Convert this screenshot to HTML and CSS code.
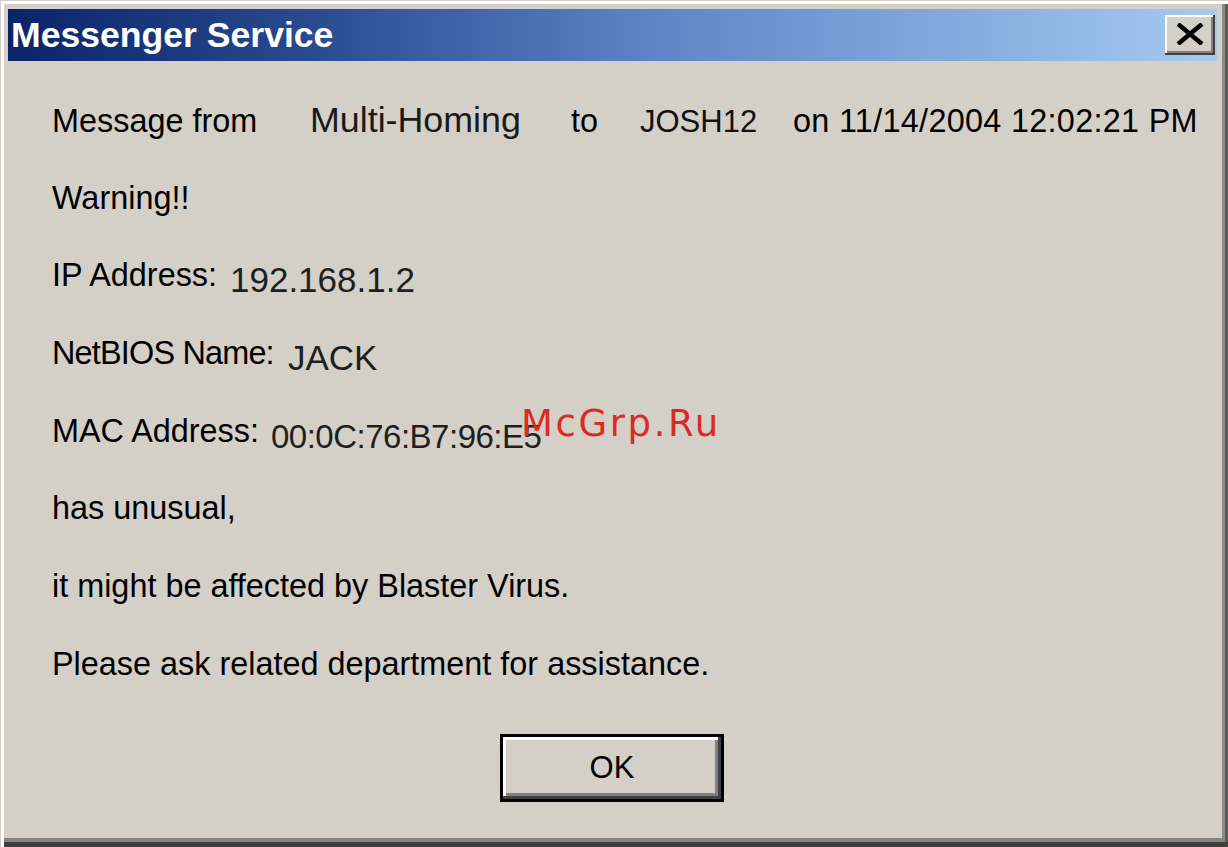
FILE: index.html
```html
<!DOCTYPE html>
<html>
<head>
<meta charset="utf-8">
<title>Messenger Service</title>
<link rel="stylesheet" href="styles.css">
</head>
<body>
<div class="window">
  <div class="titlebar">
    <span class="title">Messenger Service</span>
    <button class="close" aria-label="Close">
      <svg width="28" height="22" viewBox="0 0 28 22"><path d="M2 1 L26 21 M26 1 L2 21" stroke="#000" stroke-width="4.5" fill="none"/></svg>
    </button>
  </div>
  <div class="content">
    <div class="row">
      <span class="cell w1">Message from</span><span class="cell w2 val-big">Multi-Homing</span><span class="cell w3">to</span><span class="cell w4 josh">JOSH12</span><span class="cell date">on 11/14/2004 12:02:21 PM</span>
    </div>
    <div class="row">Warning!!</div>
    <div class="row"><span class="cell wip">IP Address:</span><span class="val">192.168.1.2</span></div>
    <div class="row"><span class="cell wnb">NetBIOS Name:</span><span class="val">JACK</span></div>
    <div class="row"><span class="cell wmac">MAC Address:</span><span class="val mac">00:0C:76:B7:96:E5</span></div>
    <div class="row">has unusual,</div>
    <div class="row">it might be affected by Blaster Virus.</div>
    <div class="row">Please ask related department for assistance.</div>
    <div class="actions">
      <button class="ok">OK</button>
    </div>
  </div>
  <div class="watermark">McGrp.Ru</div>
</div>
</body>
</html>
```

FILE: styles.css
```css
html, body {
  margin: 0;
  padding: 0;
  background: #d4d0c8;
}
.window {
  position: relative;
  width: 1228px;
  height: 847px;
  box-sizing: border-box;
  background: #d4d0c8;
  padding: 9px 11px 0 8px;
  box-shadow:
    inset 1px 1px 0 #d4d0c8,
    inset 4px 4px 0 #ffffff,
    inset 0 -5px 0 #3e3e3a,
    inset -3px 0 0 #5a5a56,
    inset 0 -9px 0 #858581,
    inset -6px 0 0 #8a8a86;
  font-family: "Liberation Sans", Arial, sans-serif;
  color: #000;
  overflow: hidden;
}
.titlebar {
  height: 52px;
  display: flex;
  align-items: center;
  justify-content: space-between;
  background: linear-gradient(to right, #0a246a 0%, #2a4a90 25%, #6088c8 55%, #a6caf0 100%);
  padding: 0 2px 0 3px;
}
.title {
  color: #fff;
  font-weight: bold;
  font-size: 35.6px;
  line-height: 52px;
}
.close {
  width: 50px;
  height: 40px;
  padding: 0;
  margin: 0;
  background: #d4d0c8;
  border: none;
  box-shadow:
    inset -2px -2px 0 #404040,
    inset 2px 2px 0 #ffffff,
    inset -4px -4px 0 #808080;
  display: flex;
  align-items: center;
  justify-content: center;
}
.close svg {
  display: block;
  margin-top: -2px;
}
.content {
  padding: 21px 0 0 44px;
}
.row {
  height: 77.7px;
  line-height: 77.7px;
  font-size: 32.4px;
  white-space: nowrap;
}
.cell {
  display: inline-block;
}
.w1 { width: 258px; }
.w2 { width: 261px; }
.w3 { width: 69px; }
.w4 { width: 153px; }
.wip { width: 178px; }
.wnb { width: 236px; letter-spacing: -0.8px; }
.wmac { width: 219px; }
.date { letter-spacing: 0.3px; }
.val-big {
  font-size: 35.8px;
  color: #1a1a1a;
}
.josh {
  font-size: 31px;
  color: #111;
}
.val {
  font-size: 35px;
  color: #1e1e1e;
  vertical-align: -6px;
  letter-spacing: 0;
}
.mac {
  font-size: 33px;
  letter-spacing: -0.5px;
}
.actions {
  display: flex;
  justify-content: center;
  padding-top: 30px;
  padding-right: 45px;
}
.ok {
  width: 224px;
  height: 68px;
  background: #d4d0c8;
  border: 3px solid #000;
  box-shadow:
    inset -3px -3px 0 #404040,
    inset 3px 3px 0 #ffffff,
    inset -6px -6px 0 #808080;
  font-family: "Liberation Sans", Arial, sans-serif;
  font-size: 31px;
  color: #000;
  padding: 0;
}
.watermark {
  position: absolute;
  left: 521px;
  top: 400px;
  font-family: "DejaVu Sans", sans-serif;
  font-size: 37px;
  letter-spacing: 2.6px;
  color: #dc2a22;
  line-height: 48px;
}
```
